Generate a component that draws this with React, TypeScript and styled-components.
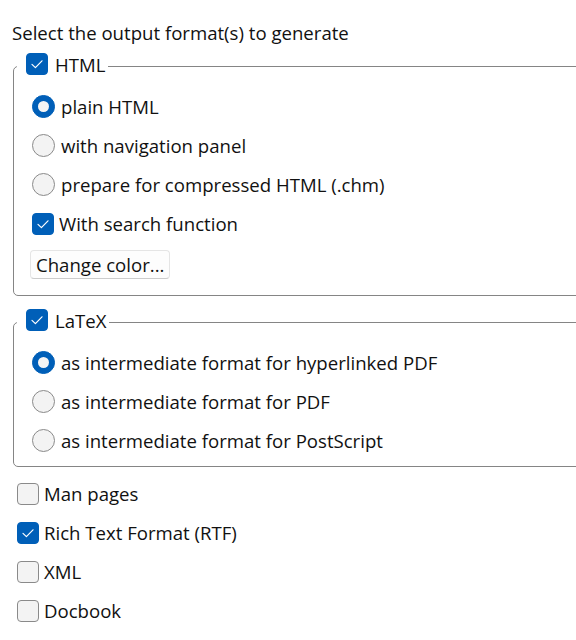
import React from 'react'
import styled, { createGlobalStyle } from 'styled-components'

const GlobalStyle = createGlobalStyle`
  html, body {
    margin: 0;
    padding: 0;
    background: #ffffff;
    overflow: hidden;
  }
  body {
    font-family: "Open Sans", "Noto Sans", sans-serif;
    font-size: 18.6px;
    color: #111111;
  }
`

const Page = styled.div`
  width: 576px;
  height: 640px;
  box-sizing: border-box;
  overflow: hidden;
  padding: 13px 0 0 12px;
`

const Title = styled.div`
  height: 39px;
  line-height: 39px;
`

const Group = styled.fieldset<{ $top: number; $bottom: number }>`
  margin: ${p => p.$top}px -40px 0 1px;
  padding: 0 0 ${p => p.$bottom}px 0;
  border: 1px solid #858585;
  border-radius: 5px;
  min-width: 0;
`

const Legend = styled.legend`
  margin-left: 3px;
  padding: 0 3px 4px 9px;
`

const LegendInner = styled.div`
  display: flex;
  align-items: center;
  gap: 7px;
  height: 22px;
`

const GroupBody = styled.div`
  padding: 8px 0 0 18px;
`

const Row = styled.div<{ $gap?: number; $indent?: number }>`
  display: flex;
  align-items: center;
  height: 39px;
  gap: ${p => p.$gap ?? 6}px;
  margin-left: ${p => p.$indent ?? 0}px;
  white-space: nowrap;
`

const Box = styled.span<{ $checked: boolean }>`
  box-sizing: border-box;
  width: 22px;
  height: 22px;
  flex: none;
  border-radius: 4px;
  display: flex;
  align-items: center;
  justify-content: center;
  background: ${p => (p.$checked ? '#005fb8' : '#f3f3f3')};
  border: 1px solid ${p => (p.$checked ? '#005fb8' : '#8a8a8a')};
`

const Radio = styled.span<{ $checked: boolean }>`
  box-sizing: border-box;
  width: 23px;
  height: 23px;
  flex: none;
  border-radius: 50%;
  display: flex;
  align-items: center;
  justify-content: center;
  background: ${p => (p.$checked ? '#005fb8' : '#f3f3f3')};
  border: 1px solid ${p => (p.$checked ? '#005fb8' : '#8a8a8a')};
`

const Dot = styled.span`
  width: 11px;
  height: 11px;
  border-radius: 50%;
  background: #f5f5f5;
`

const Button = styled.button`
  margin: 7px 0 0 -2px;
  height: 29px;
  padding: 0 5px;
  font: inherit;
  color: #111111;
  background: #fdfdfd;
  border: 1px solid #e5e5e5;
  border-bottom-color: #cccccc;
  border-radius: 4px;
`

const Extras = styled.div`
  margin-top: 7px;
`

const Check = () => (
  <svg width="16" height="16" viewBox="0 0 16 16" fill="none">
    <path d="M3 8.4 L6.4 11.6 L13 4.8" stroke="#ffffff" strokeWidth="1.2" strokeLinecap="round" strokeLinejoin="round" />
  </svg>
)

const CheckBox = ({ checked }: { checked: boolean }) => (
  <Box $checked={checked}>{checked && <Check />}</Box>
)

const RadioButton = ({ checked }: { checked: boolean }) => (
  <Radio $checked={checked}>{checked && <Dot />}</Radio>
)

type Option = { label: string; checked: boolean }

const htmlOptions: Option[] = [
  { label: 'plain HTML', checked: true },
  { label: 'with navigation panel', checked: false },
  { label: 'prepare for compressed HTML (.chm)', checked: false },
]

const latexOptions: Option[] = [
  { label: 'as intermediate format for hyperlinked PDF', checked: true },
  { label: 'as intermediate format for PDF', checked: false },
  { label: 'as intermediate format for PostScript', checked: false },
]

const extras: Option[] = [
  { label: 'Man pages', checked: false },
  { label: 'Rich Text Format (RTF)', checked: true },
  { label: 'XML', checked: false },
  { label: 'Docbook', checked: false },
]

export default function App() {
  return (
    <Page>
      <GlobalStyle />
      <Title>Select the output format(s) to generate</Title>

      <Group $top={1} $bottom={16}>
        <Legend>
          <LegendInner>
            <CheckBox checked />
            HTML
          </LegendInner>
        </Legend>
        <GroupBody>
          {htmlOptions.map(o => (
            <Row key={o.label}>
              <RadioButton checked={o.checked} />
              {o.label}
            </Row>
          ))}
          <Row $gap={5}>
            <CheckBox checked />
            With search function
          </Row>
          <Button>Change color...</Button>
        </GroupBody>
      </Group>

      <Group $top={13} $bottom={6}>
        <Legend>
          <LegendInner>
            <CheckBox checked />
            LaTeX
          </LegendInner>
        </Legend>
        <GroupBody>
          {latexOptions.map(o => (
            <Row key={o.label}>
              <RadioButton checked={o.checked} />
              {o.label}
            </Row>
          ))}
        </GroupBody>
      </Group>

      <Extras>
        {extras.map(o => (
          <Row key={o.label} $gap={5} $indent={5}>
            <CheckBox checked={o.checked} />
            {o.label}
          </Row>
        ))}
      </Extras>
    </Page>
  )
}
